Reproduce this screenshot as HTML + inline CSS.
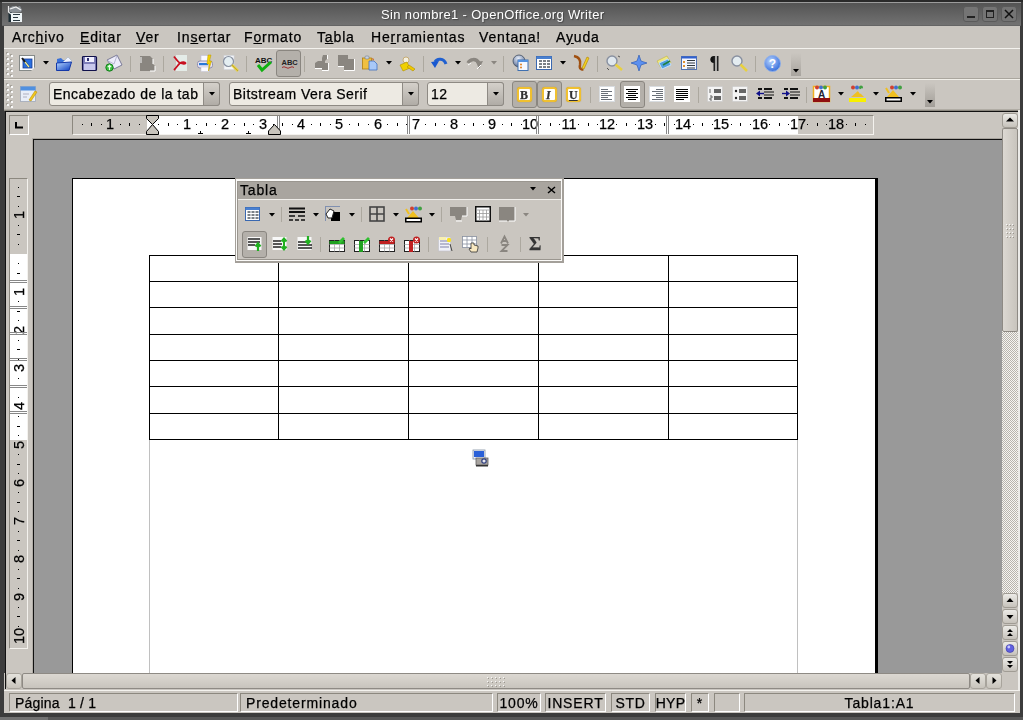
<!DOCTYPE html><html><head><meta charset="utf-8"><style>
html,body{margin:0;padding:0;width:1023px;height:720px;overflow:hidden;background:#3a3a3a;}
body{position:relative;font-family:"Liberation Sans", sans-serif;} .t{will-change:transform;-webkit-text-stroke:0.25px currentColor;}
div{box-sizing:border-box;}
svg{position:absolute;overflow:visible;}
</style></head><body>
<div style="position:absolute;left:0px;top:0px;width:1023px;height:720px;background:#3c3c3c"></div>
<div style="position:absolute;left:0px;top:0px;width:1023px;height:2px;background:#2a2a2a"></div>
<div style="position:absolute;left:2px;top:2px;width:1019px;height:1px;background:#9c9c9c"></div>
<div style="position:absolute;left:2px;top:3px;width:1019px;height:23px;background:linear-gradient(#545454,#737373)"></div>
<div style="position:absolute;left:2px;top:25px;width:1019px;height:1px;background:#656565"></div>
<svg style="left:7px;top:5px" width="16" height="17" viewBox="0 0 16 17"><path d="M2 3 L6 1 L10 2 L13 1 L15 5 L14 7 L3 8 Z" fill="#8a9096"/><path d="M3 4 L9 2 L14 5" stroke="#f0f0f0" stroke-width="1.3" fill="none"/><rect x="1.5" y="7" width="3" height="10" fill="#1c2c34"/><rect x="4" y="8" width="11" height="9" fill="#eef4f6"/><path d="M6 9.5h7M6 12.5h5M6 15.5h7" stroke="#2a3840" stroke-width="1.2"/><path d="M1.5 1 V7 L4 9" stroke="#e8e8e8" stroke-width="1.2" fill="none"/></svg>
<div class="t" style="position:absolute;left:381px;top:8px;font-size:13px;color:#ffffff;white-space:nowrap;line-height:1;letter-spacing:0.35px;-webkit-text-stroke:0;text-shadow:1px 1px 1px rgba(0,0,0,0.35)">Sin nombre1 - OpenOffice.org Writer</div>
<div style="position:absolute;left:963px;top:6px;width:16px;height:16px;background:#747474;border-radius:3px;border:1px solid #5a5a5a"></div>
<div style="position:absolute;left:982px;top:6px;width:16px;height:16px;background:#747474;border-radius:3px;border:1px solid #5a5a5a"></div>
<div style="position:absolute;left:1001px;top:6px;width:16px;height:16px;background:#747474;border-radius:3px;border:1px solid #5a5a5a"></div>
<div style="position:absolute;left:967px;top:16px;width:8px;height:2px;background:#222"></div>
<div style="position:absolute;left:986px;top:10px;width:8px;height:8px;border:1.5px solid #222;border-top-width:2px"></div>
<svg style="left:1004px;top:9px" width="10" height="10"><path d="M1 1L9 9M9 1L1 9" stroke="#111" stroke-width="1.5"/></svg>
<div style="position:absolute;left:4px;top:26px;width:1016px;height:22px;background:#cac6c0"></div>
<div style="position:absolute;left:4px;top:48px;width:1016px;height:1px;background:#f4f2ee"></div>
<div class="t" style="position:absolute;left:12px;top:30px;font-size:14px;color:#000;white-space:nowrap;line-height:1;letter-spacing:0.85px">Arc<u>h</u>ivo</div>
<div class="t" style="position:absolute;left:80px;top:30px;font-size:14px;color:#000;white-space:nowrap;line-height:1;letter-spacing:0.85px"><u>E</u>ditar</div>
<div class="t" style="position:absolute;left:136px;top:30px;font-size:14px;color:#000;white-space:nowrap;line-height:1;letter-spacing:0.85px"><u>V</u>er</div>
<div class="t" style="position:absolute;left:177px;top:30px;font-size:14px;color:#000;white-space:nowrap;line-height:1;letter-spacing:0.85px">In<u>s</u>ertar</div>
<div class="t" style="position:absolute;left:244px;top:30px;font-size:14px;color:#000;white-space:nowrap;line-height:1;letter-spacing:0.85px">F<u>o</u>rmato</div>
<div class="t" style="position:absolute;left:317px;top:30px;font-size:14px;color:#000;white-space:nowrap;line-height:1;letter-spacing:0.85px">T<u>a</u>bla</div>
<div class="t" style="position:absolute;left:371px;top:30px;font-size:14px;color:#000;white-space:nowrap;line-height:1;letter-spacing:0.85px">He<u>r</u>ramientas</div>
<div class="t" style="position:absolute;left:479px;top:30px;font-size:14px;color:#000;white-space:nowrap;line-height:1;letter-spacing:0.85px">Venta<u>n</u>a!</div>
<div class="t" style="position:absolute;left:556px;top:30px;font-size:14px;color:#000;white-space:nowrap;line-height:1;letter-spacing:0.85px">A<u>y</u>uda</div>
<div style="position:absolute;left:4px;top:49px;width:1016px;height:29px;background:#cac6c0"></div>
<div style="position:absolute;left:4px;top:78px;width:1016px;height:1px;background:#aaa69e"></div>
<div style="position:absolute;left:4px;top:79px;width:1016px;height:1px;background:#f0eee8"></div>
<div style="position:absolute;left:4px;top:80px;width:1016px;height:30px;background:#cac6c0"></div>
<div style="position:absolute;left:4px;top:109px;width:1016px;height:1px;background:#b0aca4"></div>
<div style="position:absolute;left:4px;top:110px;width:1016px;height:1px;background:#8a867e"></div>
<div style="position:absolute;left:7px;top:53px;width:2px;height:2px;background:#f8f8f8;box-shadow:-1px -1px 0 #a8a49c"></div>
<div style="position:absolute;left:11px;top:55px;width:2px;height:2px;background:#f8f8f8;box-shadow:-1px -1px 0 #a8a49c"></div>
<div style="position:absolute;left:7px;top:58px;width:2px;height:2px;background:#f8f8f8;box-shadow:-1px -1px 0 #a8a49c"></div>
<div style="position:absolute;left:11px;top:60px;width:2px;height:2px;background:#f8f8f8;box-shadow:-1px -1px 0 #a8a49c"></div>
<div style="position:absolute;left:7px;top:63px;width:2px;height:2px;background:#f8f8f8;box-shadow:-1px -1px 0 #a8a49c"></div>
<div style="position:absolute;left:11px;top:65px;width:2px;height:2px;background:#f8f8f8;box-shadow:-1px -1px 0 #a8a49c"></div>
<div style="position:absolute;left:7px;top:68px;width:2px;height:2px;background:#f8f8f8;box-shadow:-1px -1px 0 #a8a49c"></div>
<div style="position:absolute;left:11px;top:70px;width:2px;height:2px;background:#f8f8f8;box-shadow:-1px -1px 0 #a8a49c"></div>
<div style="position:absolute;left:7px;top:73px;width:2px;height:2px;background:#f8f8f8;box-shadow:-1px -1px 0 #a8a49c"></div>
<div style="position:absolute;left:11px;top:75px;width:2px;height:2px;background:#f8f8f8;box-shadow:-1px -1px 0 #a8a49c"></div>
<div style="position:absolute;left:7px;top:84px;width:2px;height:2px;background:#f8f8f8;box-shadow:-1px -1px 0 #a8a49c"></div>
<div style="position:absolute;left:11px;top:86px;width:2px;height:2px;background:#f8f8f8;box-shadow:-1px -1px 0 #a8a49c"></div>
<div style="position:absolute;left:7px;top:89px;width:2px;height:2px;background:#f8f8f8;box-shadow:-1px -1px 0 #a8a49c"></div>
<div style="position:absolute;left:11px;top:91px;width:2px;height:2px;background:#f8f8f8;box-shadow:-1px -1px 0 #a8a49c"></div>
<div style="position:absolute;left:7px;top:94px;width:2px;height:2px;background:#f8f8f8;box-shadow:-1px -1px 0 #a8a49c"></div>
<div style="position:absolute;left:11px;top:96px;width:2px;height:2px;background:#f8f8f8;box-shadow:-1px -1px 0 #a8a49c"></div>
<div style="position:absolute;left:7px;top:99px;width:2px;height:2px;background:#f8f8f8;box-shadow:-1px -1px 0 #a8a49c"></div>
<div style="position:absolute;left:11px;top:101px;width:2px;height:2px;background:#f8f8f8;box-shadow:-1px -1px 0 #a8a49c"></div>
<div style="position:absolute;left:7px;top:104px;width:2px;height:2px;background:#f8f8f8;box-shadow:-1px -1px 0 #a8a49c"></div>
<div style="position:absolute;left:11px;top:106px;width:2px;height:2px;background:#f8f8f8;box-shadow:-1px -1px 0 #a8a49c"></div>
<svg style="left:0;top:0" width="0" height="0"><defs><linearGradient id="gb" x1="0" y1="0" x2="0" y2="1"><stop offset="0" stop-color="#8cc0ff"/><stop offset="1" stop-color="#1048c8"/></linearGradient><linearGradient id="gf" x1="0" y1="0" x2="1" y2="1"><stop offset="0" stop-color="#b8d8ff"/><stop offset="1" stop-color="#0a3cc0"/></linearGradient><radialGradient id="gh" cx="0.4" cy="0.35" r="0.7"><stop offset="0" stop-color="#b8d4ff"/><stop offset="1" stop-color="#3068d8"/></radialGradient><linearGradient id="gx" x1="0" y1="0" x2="0" y2="1"><stop offset="0" stop-color="#e8e6e2"/><stop offset="1" stop-color="#8e8a84"/></linearGradient><radialGradient id="gg" cx="0.45" cy="0.3" r="0.8"><stop offset="0" stop-color="#e8eef8"/><stop offset="0.6" stop-color="#8898b8"/><stop offset="1" stop-color="#304060"/></radialGradient></defs></svg>
<svg style="left:19px;top:55px" width="16" height="16" viewBox="0 0 16 16"><rect x="0.5" y="0.5" width="15" height="15" fill="#fafcff" stroke="#868a88"/><rect x="4" y="4" width="9" height="9" fill="#2a70e0" stroke="#1a3a90" stroke-width="0.8"/><path d="M3 3 L10 12" stroke="#1a1a1a" stroke-width="2"/><path d="M6 7 L10 12" stroke="#e8e8a0" stroke-width="1.5"/><path d="M12 16 L16 12 L16 16Z" fill="#cac6c0"/></svg>
<svg style="left:43px;top:61px" width="6" height="4"><path d="M0 0H6L3 3.5Z" fill="#000"/></svg>
<svg style="left:56px;top:55px" width="16" height="16" viewBox="0 0 16 16"><path d="M1 4 L5 3 L7 5 L13 5 L13 15 L1 15Z" fill="#3a70d8"/><path d="M5 9 L12 2 L16 6 L11 10Z" fill="#eef2ff" stroke="#9ab" stroke-width="0.5"/><path d="M0.5 8 L15.5 7 L13 15.5 L0.5 15.5Z" fill="url(#gf)" stroke="#1438a8" stroke-width="1"/></svg>
<svg style="left:82px;top:56px" width="15" height="15" viewBox="0 0 15 15"><rect x="0.5" y="0.5" width="14" height="14" rx="1" fill="#7e7eb8" stroke="#10104a" stroke-width="1.2"/><rect x="3" y="1" width="9" height="5" fill="#f0f0ff"/><rect x="5" y="2" width="2" height="3" fill="#303070"/><rect x="2" y="8" width="11" height="6" fill="#c8c8ec"/></svg>
<svg style="left:105px;top:54px" width="18" height="18" viewBox="0 0 18 18"><path d="M2 6 L12 1 L17 11 L9 15 Z" fill="#ececfa" stroke="#707090" stroke-width="0.9"/><path d="M2.5 6.5 L9 10 L12 1.5" fill="none" stroke="#a8a8c8" stroke-width="0.8"/><circle cx="4.5" cy="13.5" r="3.7" fill="#3cc040" stroke="#107818" stroke-width="0.9"/><path d="M4.5 16 V11.5 M2.8 13.2 L4.5 11.3 L6.2 13.2" stroke="#e8ffe8" stroke-width="1.2" fill="none"/></svg>
<div style="position:absolute;left:130px;top:56px;width:1px;height:16px;background:#aca89f"></div>
<svg style="left:139px;top:55px" width="17" height="17" viewBox="0 0 17 17"><path d="M1 1 H11 L14 4 V9 L16 11 V16 H1Z" fill="#8a8680"/><path d="M11 16 H16 V11 M14 4 V9" stroke="#fff" stroke-width="1" fill="none"/><path d="M2 2 V8" stroke="#f4f4f4" stroke-width="1"/></svg>
<div style="position:absolute;left:163px;top:56px;width:1px;height:16px;background:#aca89f"></div>
<svg style="left:172px;top:55px" width="16" height="16" viewBox="0 0 16 16"><rect x="4" y="0" width="11" height="16" fill="#e4ece8"/><path d="M2 1.5 C4 4 6 7 8 8 M8 8 C11 9 13 9 13.5 8 C13 6.5 10 7 8 8 C6 10 4 13 2 15" fill="none" stroke="#c81020" stroke-width="1.8"/></svg>
<svg style="left:197px;top:55px" width="17" height="17" viewBox="0 0 17 17"><rect x="4" y="0.5" width="9" height="6" fill="#f8f8ff" stroke="#c0c0d8" stroke-width="0.6"/><rect x="0.5" y="6" width="15" height="7" rx="2.5" fill="#e8e4f4" stroke="#8888a8" stroke-width="0.9"/><rect x="2" y="8" width="9" height="2.2" fill="#2878d8"/><rect x="4" y="12" width="8" height="4.5" fill="#fafaff" stroke="#c0c0d0" stroke-width="0.5"/><path d="M11 0 L14 0 L12.5 6 L14.5 6 L11.5 16 L12 9 L10 9Z" fill="#f4d000" stroke="#b89800" stroke-width="0.5"/></svg>
<svg style="left:222px;top:55px" width="17" height="17" viewBox="0 0 17 17"><rect x="2" y="0.5" width="10" height="14" fill="#f4f6f8" stroke="#d0d4dc" stroke-width="0.6"/><circle cx="6.5" cy="6.5" r="5" fill="#e4eef2" stroke="#8890a0" stroke-width="1.2"/><path d="M10 10 L16 16" stroke="#e8d040" stroke-width="2.5"/><path d="M10 10 L16 16" stroke="#908030" stroke-width="0.5"/></svg>
<div style="position:absolute;left:246px;top:56px;width:1px;height:16px;background:#aca89f"></div>
<svg style="left:254px;top:55px" width="18" height="17" viewBox="0 0 18 17"><text x="1" y="7.5" font-family="Liberation Sans" font-weight="bold" font-size="8" fill="#111">ABC</text><path d="M4 10 L8 15 L17 7" fill="none" stroke="#10b010" stroke-width="3"/></svg>
<div style="position:absolute;left:276px;top:50px;width:25px;height:27px;background:#b4b0aa;border:1px solid #8a8680;border-radius:3px"></div>
<svg style="left:281px;top:58px" width="15" height="12" viewBox="0 0 15 12"><text x="0.5" y="7" font-family="Liberation Sans" font-weight="bold" font-size="7.5" fill="#222">ABC</text><path d="M1 9.5 Q3 8 5 9.5 T9 9.5 T13 9.5" fill="none" stroke="#a03030" stroke-width="1"/></svg>
<div style="position:absolute;left:304px;top:56px;width:1px;height:16px;background:#aca89f"></div>
<svg style="left:314px;top:55px" width="16" height="17" viewBox="0 0 16 17"><path d="M9 0 H13 V4 L11 6 V8 H14 V15 H8 V13 H1 V8 L4 6 H8 V3Z" fill="#8a8680"/><path d="M13.5 0 V4 M14.5 8 V15.5 H8 M8 13.5 H1" stroke="#fff" stroke-width="1" fill="none"/></svg>
<svg style="left:338px;top:55px" width="18" height="17" viewBox="0 0 18 17"><rect x="0" y="0" width="10" height="11" fill="#8a8680"/><rect x="6" y="4" width="10" height="11" fill="#8a8680"/><path d="M0 11.5 H6 M16.5 4 V15.5 H6" stroke="#fff" stroke-width="1" fill="none"/></svg>
<svg style="left:362px;top:55px" width="17" height="16" viewBox="0 0 17 16"><rect x="0.5" y="3" width="9" height="11" fill="#f0c040" stroke="#b08010" stroke-width="0.8"/><rect x="3" y="1" width="4" height="3" rx="1" fill="#c8d0e0" stroke="#708090" stroke-width="0.6"/><path d="M7 6 H12 L15 9 V15 H7Z" fill="#a8c8f8" stroke="#4070c0" stroke-width="0.8"/><path d="M10 3 L12 4 L11 6" fill="#d06010"/></svg>
<svg style="left:386px;top:61px" width="6" height="4"><path d="M0 0H6L3 3.5Z" fill="#000"/></svg>
<svg style="left:399px;top:55px" width="17" height="17" viewBox="0 0 17 17"><circle cx="7" cy="5" r="3" fill="#f4f0e0" stroke="#c0a060" stroke-width="0.8"/><path d="M1 10 L8 7 L11 13 L4 16Z" fill="#f0d000" stroke="#b09000" stroke-width="0.6"/><path d="M10 10 L16 14 L14 16 L8 12Z" fill="#f0c800" stroke="#b09000" stroke-width="0.6"/></svg>
<div style="position:absolute;left:423px;top:56px;width:1px;height:16px;background:#aca89f"></div>
<svg style="left:431px;top:57px" width="17" height="12" viewBox="0 0 17 12"><path d="M15 7 C13 1 6 1 4 5" fill="none" stroke="#2060d0" stroke-width="3"/><path d="M0 5 L8 4 L4 11Z" fill="#1858d0"/></svg>
<svg style="left:455px;top:61px" width="6" height="4"><path d="M0 0H6L3 3.5Z" fill="#000"/></svg>
<svg style="left:467px;top:57px" width="17" height="13" viewBox="0 0 17 13"><path d="M1 6 C3 2 9 1 12 6" fill="none" stroke="#8a8680" stroke-width="3.5"/><path d="M9 5 L16 4 L12 12Z" fill="#8a8680"/><path d="M1 8 L4 6 M10 12 L14 8" stroke="#fff" stroke-width="1"/></svg>
<svg style="left:491px;top:61px" width="6" height="4"><path d="M0 0H6L3 3.5Z" fill="#8a8680"/></svg>
<div style="position:absolute;left:503px;top:56px;width:1px;height:16px;background:#aca89f"></div>
<svg style="left:513px;top:55px" width="16" height="16" viewBox="0 0 16 16"><circle cx="6" cy="6" r="6" fill="url(#gg)" stroke="#404c60" stroke-width="0.8"/><rect x="5" y="5" width="10" height="10.5" fill="#f4f8ff" stroke="#4070b0" stroke-width="1"/><rect x="5" y="5" width="10" height="2" fill="#5090e0"/><circle cx="8" cy="9.5" r="1" fill="#e08020"/><circle cx="8" cy="12.5" r="1" fill="#e08020"/></svg>
<svg style="left:536px;top:56px" width="16" height="14" viewBox="0 0 16 14"><rect x="0.5" y="0.5" width="15" height="13" fill="#fff" stroke="#3a68b0" stroke-width="1"/><rect x="0.5" y="0.5" width="15" height="2.5" fill="#4a80d0"/><path d="M3 5h3M7 5h3M11 5h3M3 8h3M7 8h3M11 8h3M3 11h3M7 11h3M11 11h3" stroke="#505860" stroke-width="1.3"/></svg>
<svg style="left:560px;top:61px" width="6" height="4"><path d="M0 0H6L3 3.5Z" fill="#000"/></svg>
<svg style="left:573px;top:55px" width="16" height="16" viewBox="0 0 16 16"><path d="M1 1 C6 2 8 5 7 10 C6 14 9 15 10 14" fill="none" stroke="#a05010" stroke-width="2.5"/><path d="M9 13 L14 2 L16 3 L11 14Z" fill="#f0d020" stroke="#b08000" stroke-width="0.6"/></svg>
<div style="position:absolute;left:597px;top:56px;width:1px;height:16px;background:#aca89f"></div>
<svg style="left:606px;top:55px" width="17" height="16" viewBox="0 0 17 16"><circle cx="6" cy="6" r="5" fill="#e0e8ee" stroke="#8890a0" stroke-width="1.4"/><path d="M9.5 9.5 L16 15" stroke="#e8d040" stroke-width="2.5"/><path d="M12 1 L14 2 M1 13 L3 15" stroke="#555" stroke-width="1"/></svg>
<svg style="left:631px;top:55px" width="16" height="16" viewBox="0 0 16 16"><path d="M8 0 L10 6 L16 8 L10 10 L8 16 L6 10 L0 8 L6 6Z" fill="#5c90f0" stroke="#2050b0" stroke-width="0.6"/></svg>
<svg style="left:656px;top:55px" width="16" height="15" viewBox="0 0 16 15"><path d="M1 6 L11 1 L15 8 L5 13Z" fill="#f0e880" stroke="#c0b040" stroke-width="0.6"/><path d="M3 8 L12 4 L15 10 L6 14Z" fill="#50a0e0" stroke="#c0e0ff" stroke-width="1"/><path d="M7 10 L14 6" stroke="#208040" stroke-width="1.5"/></svg>
<svg style="left:681px;top:56px" width="16" height="14" viewBox="0 0 16 14"><rect x="0.5" y="0.5" width="15" height="13" fill="#f4f6ff" stroke="#5070b0" stroke-width="1"/><rect x="0.5" y="0.5" width="15" height="2" fill="#3060d0"/><rect x="2" y="5" width="2" height="2" fill="#e09030"/><rect x="2" y="9" width="2" height="2" fill="#e09030"/><path d="M6 4.5h8M6 7h8M6 9.5h8M6 12h8" stroke="#303840" stroke-width="1"/></svg>
<svg style="left:709px;top:55px" width="10" height="17" viewBox="0 0 10 17"><path d="M5 1 C0 1 0 8 5 8Z" fill="#111"/><rect x="4.5" y="1" width="2" height="15" fill="#222"/><rect x="7.5" y="1" width="2" height="15" fill="#222"/><rect x="6.5" y="1" width="1" height="15" fill="#ddd"/></svg>
<svg style="left:731px;top:55px" width="17" height="17" viewBox="0 0 17 17"><circle cx="6" cy="6" r="5" fill="#e4ecf0" stroke="#8890a0" stroke-width="1.4"/><path d="M9.5 9.5 L16 16" stroke="#e8d040" stroke-width="2.5"/></svg>
<div style="position:absolute;left:755px;top:56px;width:1px;height:16px;background:#aca89f"></div>
<svg style="left:764px;top:55px" width="17" height="17" viewBox="0 0 17 17"><circle cx="8.5" cy="8.5" r="8" fill="url(#gh)" stroke="#90b0e8" stroke-width="1"/><text x="8.5" y="13" text-anchor="middle" font-family="Liberation Sans" font-weight="bold" font-size="12" fill="#fff">?</text></svg>
<div style="position:absolute;left:791px;top:53px;width:10px;height:23px;background:linear-gradient(#cac6c0,#a8a49e)"></div>
<svg style="left:793px;top:69px" width="6" height="4"><path d="M0 0H6L3 3.5Z" fill="#000"/></svg>
<svg style="left:20px;top:86px" width="17" height="17" viewBox="0 0 17 17"><rect x="0.5" y="0.5" width="15" height="15" fill="#e8eef8" stroke="#a0a8b8" stroke-width="0.8"/><rect x="0.5" y="0.5" width="15" height="4" fill="#5090e0"/><path d="M3 8h6M3 11h4" stroke="#b0b0c0" stroke-width="1"/><path d="M9 14 L15 5 L17 6 L11 15Z" fill="#f0c820" stroke="#c09000" stroke-width="0.6"/></svg>
<div style="position:absolute;left:49px;top:82px;width:171px;height:24px;background:#edeae3;border:1px solid #8e8a84;border-radius:3px"></div>
<div style="position:absolute;left:203px;top:82px;width:17px;height:24px;background:linear-gradient(#d4d0ca,#b0aca6);border:1px solid #8e8a84;border-radius:0 3px 3px 0"></div>
<svg style="left:209px;top:92px" width="6" height="4"><path d="M0 0H6L3 3.5Z" fill="#000"/></svg>
<div class="t" style="position:absolute;left:53px;top:87px;font-size:14px;color:#000;white-space:nowrap;line-height:1;letter-spacing:0.5px">Encabezado de la tab</div>
<div style="position:absolute;left:229px;top:82px;width:190px;height:24px;background:#edeae3;border:1px solid #8e8a84;border-radius:3px"></div>
<div style="position:absolute;left:402px;top:82px;width:17px;height:24px;background:linear-gradient(#d4d0ca,#b0aca6);border:1px solid #8e8a84;border-radius:0 3px 3px 0"></div>
<svg style="left:408px;top:92px" width="6" height="4"><path d="M0 0H6L3 3.5Z" fill="#000"/></svg>
<div class="t" style="position:absolute;left:233px;top:87px;font-size:14px;color:#000;white-space:nowrap;line-height:1;letter-spacing:0.5px">Bitstream Vera Serif</div>
<div style="position:absolute;left:427px;top:82px;width:77px;height:24px;background:#edeae3;border:1px solid #8e8a84;border-radius:3px"></div>
<div style="position:absolute;left:487px;top:82px;width:17px;height:24px;background:linear-gradient(#d4d0ca,#b0aca6);border:1px solid #8e8a84;border-radius:0 3px 3px 0"></div>
<svg style="left:493px;top:92px" width="6" height="4"><path d="M0 0H6L3 3.5Z" fill="#000"/></svg>
<div class="t" style="position:absolute;left:431px;top:87px;font-size:14px;color:#000;white-space:nowrap;line-height:1;letter-spacing:0.5px">12</div>
<div style="position:absolute;left:512px;top:81px;width:25px;height:27px;background:#b4b0aa;border:1px solid #8a8680;border-radius:3px"></div>
<div style="position:absolute;left:537px;top:81px;width:25px;height:27px;background:#b4b0aa;border:1px solid #8a8680;border-radius:3px"></div>
<div style="position:absolute;left:517px;top:87px;width:15px;height:15px;background:#fff;border:2px solid #f0c030;border-radius:3px;box-shadow:0 0 1px #c09010"></div>
<div class="t" style="position:absolute;left:520px;top:89px;font-size:12px;color:#333;white-space:nowrap;line-height:1;font-family:'Liberation Serif',serif;font-weight:bold;">B</div>
<div style="position:absolute;left:542px;top:87px;width:15px;height:15px;background:#fff;border:2px solid #f0c030;border-radius:3px;box-shadow:0 0 1px #c09010"></div>
<div class="t" style="position:absolute;left:545px;top:89px;font-size:12px;color:#333;white-space:nowrap;line-height:1;font-family:'Liberation Serif',serif;font-weight:bold;font-style:italic;left:546px">I</div>
<div style="position:absolute;left:566px;top:87px;width:15px;height:15px;background:#fff;border:2px solid #f0c030;border-radius:3px;box-shadow:0 0 1px #c09010"></div>
<div class="t" style="position:absolute;left:569px;top:89px;font-size:12px;color:#333;white-space:nowrap;line-height:1;font-family:'Liberation Serif',serif;font-weight:bold;text-decoration:underline">U</div>
<div style="position:absolute;left:590px;top:87px;width:1px;height:16px;background:#aca89f"></div>
<svg style="left:599px;top:86px" width="16" height="16" viewBox="0 0 16 16"><rect x="0" y="0" width="16" height="16" fill="#fff"/><rect x="0.5" y="0.5" width="15" height="15" fill="none" stroke="#d8dce0" stroke-width="1"/><path d="M2 3.5h7M2 5.5h11M2 7.5h7M2 9.5h11M2 11.5h7M2 13.5h11" stroke="#6a7078" stroke-width="1.2"/></svg>
<div style="position:absolute;left:620px;top:81px;width:25px;height:27px;background:#b4b0aa;border:1px solid #8a8680;border-radius:3px"></div>
<svg style="left:624px;top:86px" width="16" height="16" viewBox="0 0 16 16"><rect x="0" y="0" width="16" height="16" fill="#fff"/><path d="M2 3.5h12M4 5.5h8M2 7.5h12M4 9.5h8M2 11.5h12M4 13.5h8" stroke="#000" stroke-width="1"/></svg>
<svg style="left:649px;top:86px" width="16" height="16" viewBox="0 0 16 16"><rect x="0" y="0" width="16" height="16" fill="#fff"/><rect x="0.5" y="0.5" width="15" height="15" fill="none" stroke="#d8dce0" stroke-width="1"/><path d="M7 3.5h7M3 5.5h11M7 7.5h7M3 9.5h11M7 11.5h7M3 13.5h11" stroke="#6a7078" stroke-width="1.2"/></svg>
<svg style="left:674px;top:86px" width="16" height="16" viewBox="0 0 16 16"><rect x="0" y="0" width="16" height="16" fill="#fff"/><path d="M2 3.5h12M2 5.5h12M2 7.5h12M2 9.5h12M2 11.5h12M2 13.5h8" stroke="#000" stroke-width="1"/></svg>
<div style="position:absolute;left:698px;top:87px;width:1px;height:16px;background:#aca89f"></div>
<svg style="left:707px;top:86px" width="16" height="16" viewBox="0 0 16 16"><rect x="0.5" y="0.5" width="15" height="15" fill="#f4f4f4" stroke="#c8c8c8" stroke-width="0.6"/><path d="M3 3V7M3 10h2v2h-2v2h2" stroke="#666" stroke-width="1" fill="none"/><rect x="7" y="3" width="7" height="4" fill="#666"/><rect x="7" y="10" width="7" height="4" fill="#666"/></svg>
<svg style="left:732px;top:86px" width="16" height="16" viewBox="0 0 16 16"><rect x="0.5" y="0.5" width="15" height="15" fill="#f4f4f4" stroke="#c8c8c8" stroke-width="0.6"/><circle cx="4" cy="5" r="1.2" fill="#222"/><circle cx="4" cy="12" r="1.2" fill="#222"/><rect x="7" y="3" width="7" height="4" fill="#666"/><rect x="7" y="10" width="7" height="4" fill="#666"/></svg>
<svg style="left:756px;top:88px" width="18" height="12" viewBox="0 0 18 12"><path d="M2 1h4M8 1h8M2 10h4M8 10h8" stroke="#111" stroke-width="1.8"/><path d="M8 4h10M8 7h10" stroke="#111" stroke-width="1.2"/><path d="M0 5.5 L4 2.5 V8.5Z" fill="#10108a"/><path d="M3 5.5h5" stroke="#10108a" stroke-width="1.4"/></svg>
<svg style="left:782px;top:88px" width="18" height="12" viewBox="0 0 18 12"><path d="M2 1h4M8 1h8M2 10h4M8 10h8" stroke="#111" stroke-width="1.8"/><path d="M8 4h10M8 7h10" stroke="#111" stroke-width="1.2"/><path d="M8 5.5 L4 2.5 V8.5Z" fill="#10108a"/><path d="M0 5.5h5" stroke="#10108a" stroke-width="1.4"/></svg>
<div style="position:absolute;left:806px;top:87px;width:1px;height:16px;background:#aca89f"></div>
<svg style="left:813px;top:85px" width="17" height="17" viewBox="0 0 17 17"><rect x="0.5" y="1.5" width="16" height="15" fill="#fff" stroke="#f0b020" stroke-width="1.5"/><circle cx="4" cy="2.5" r="2" fill="#d04030"/><circle cx="8" cy="2.5" r="2" fill="#4070d0"/><circle cx="12" cy="2.5" r="2" fill="#40a040"/><text x="8.5" y="12.5" text-anchor="middle" font-family="Liberation Sans" font-weight="bold" font-size="10" fill="#223">A</text><rect x="0" y="13" width="17" height="4" fill="#901010"/></svg>
<svg style="left:838px;top:92px" width="6" height="4"><path d="M0 0H6L3 3.5Z" fill="#000"/></svg>
<svg style="left:849px;top:85px" width="17" height="17" viewBox="0 0 17 17"><circle cx="4" cy="2.5" r="2" fill="#d04030"/><circle cx="8" cy="2.5" r="2" fill="#4070d0"/><circle cx="12" cy="2.5" r="2" fill="#40a040"/><path d="M2 12 L9 6 L15 12Z" fill="#f0c020"/><path d="M9 6 L13 3 L15 5 L11 9" fill="#c8c8c8"/><rect x="0" y="13" width="17" height="4" fill="#f8f000"/></svg>
<svg style="left:873px;top:92px" width="6" height="4"><path d="M0 0H6L3 3.5Z" fill="#000"/></svg>
<svg style="left:885px;top:85px" width="17" height="17" viewBox="0 0 17 17"><circle cx="7" cy="2.5" r="2" fill="#d04030"/><circle cx="11" cy="2.5" r="2" fill="#4070d0"/><circle cx="15" cy="2.5" r="2" fill="#40a040"/><path d="M2 12 L8 5 L14 12Z" fill="#f0c020"/><path d="M1 3 L4 8" stroke="#f0c020" stroke-width="2"/><rect x="0.75" y="12.75" width="15.5" height="3.5" fill="#fff" stroke="#000" stroke-width="1.5"/></svg>
<svg style="left:910px;top:92px" width="6" height="4"><path d="M0 0H6L3 3.5Z" fill="#000"/></svg>
<div style="position:absolute;left:925px;top:83px;width:10px;height:24px;background:linear-gradient(#cac6c0,#a29e98)"></div>
<svg style="left:927px;top:100px" width="6" height="4"><path d="M0 0H6L3 3.5Z" fill="#000"/></svg>
<div style="position:absolute;left:5px;top:111px;width:1013px;height:1px;background:#111"></div>
<div style="position:absolute;left:5px;top:111px;width:1px;height:562px;background:#111"></div>
<div style="position:absolute;left:6px;top:112px;width:1014px;height:27px;background:#cac6c0"></div>
<div style="position:absolute;left:9px;top:115px;width:20px;height:20px;border:1px solid #8c887f;border-right-color:#fff;border-bottom-color:#fff"></div>
<svg style="left:15px;top:122px" width="8" height="7"><path d="M1 0V5.5H8" stroke="#000" stroke-width="2" fill="none"/></svg>
<div style="position:absolute;left:72px;top:115px;width:802px;height:20px;background:#cac6c0;border:1px solid #8c887f;border-right-color:#f4f2ee;border-bottom-color:#f4f2ee"></div>
<div style="position:absolute;left:147px;top:116px;width:651px;height:18px;background:#fff"></div>
<div style="position:absolute;left:82px;top:124px;width:1px;height:1px;background:#000"></div>
<div style="position:absolute;left:91px;top:123px;width:1px;height:3px;background:#000"></div>
<div style="position:absolute;left:101px;top:124px;width:1px;height:1px;background:#000"></div>
<div class="t" style="position:absolute;left:90.2px;top:116.5px;width:40px;text-align:center;font-size:14.5px;line-height:1;color:#000">1</div>
<div style="position:absolute;left:120px;top:124px;width:1px;height:1px;background:#000"></div>
<div style="position:absolute;left:129px;top:123px;width:1px;height:3px;background:#000"></div>
<div style="position:absolute;left:139px;top:124px;width:1px;height:1px;background:#000"></div>
<div style="position:absolute;left:158px;top:124px;width:1px;height:1px;background:#000"></div>
<div style="position:absolute;left:168px;top:123px;width:1px;height:3px;background:#000"></div>
<div style="position:absolute;left:177px;top:124px;width:1px;height:1px;background:#000"></div>
<div class="t" style="position:absolute;left:166.6px;top:116.5px;width:40px;text-align:center;font-size:14.5px;line-height:1;color:#000">1</div>
<div style="position:absolute;left:196px;top:124px;width:1px;height:1px;background:#000"></div>
<div style="position:absolute;left:206px;top:123px;width:1px;height:3px;background:#000"></div>
<div style="position:absolute;left:215px;top:124px;width:1px;height:1px;background:#000"></div>
<div class="t" style="position:absolute;left:204.8px;top:116.5px;width:40px;text-align:center;font-size:14.5px;line-height:1;color:#000">2</div>
<div style="position:absolute;left:234px;top:124px;width:1px;height:1px;background:#000"></div>
<div style="position:absolute;left:244px;top:123px;width:1px;height:3px;background:#000"></div>
<div style="position:absolute;left:253px;top:124px;width:1px;height:1px;background:#000"></div>
<div class="t" style="position:absolute;left:243.0px;top:116.5px;width:40px;text-align:center;font-size:14.5px;line-height:1;color:#000">3</div>
<div style="position:absolute;left:273px;top:124px;width:1px;height:1px;background:#000"></div>
<div style="position:absolute;left:282px;top:123px;width:1px;height:3px;background:#000"></div>
<div style="position:absolute;left:292px;top:124px;width:1px;height:1px;background:#000"></div>
<div class="t" style="position:absolute;left:281.2px;top:116.5px;width:40px;text-align:center;font-size:14.5px;line-height:1;color:#000">4</div>
<div style="position:absolute;left:311px;top:124px;width:1px;height:1px;background:#000"></div>
<div style="position:absolute;left:320px;top:123px;width:1px;height:3px;background:#000"></div>
<div style="position:absolute;left:330px;top:124px;width:1px;height:1px;background:#000"></div>
<div class="t" style="position:absolute;left:319.4px;top:116.5px;width:40px;text-align:center;font-size:14.5px;line-height:1;color:#000">5</div>
<div style="position:absolute;left:349px;top:124px;width:1px;height:1px;background:#000"></div>
<div style="position:absolute;left:358px;top:123px;width:1px;height:3px;background:#000"></div>
<div style="position:absolute;left:368px;top:124px;width:1px;height:1px;background:#000"></div>
<div class="t" style="position:absolute;left:357.6px;top:116.5px;width:40px;text-align:center;font-size:14.5px;line-height:1;color:#000">6</div>
<div style="position:absolute;left:387px;top:124px;width:1px;height:1px;background:#000"></div>
<div style="position:absolute;left:397px;top:123px;width:1px;height:3px;background:#000"></div>
<div style="position:absolute;left:406px;top:124px;width:1px;height:1px;background:#000"></div>
<div class="t" style="position:absolute;left:395.8px;top:116.5px;width:40px;text-align:center;font-size:14.5px;line-height:1;color:#000">7</div>
<div style="position:absolute;left:425px;top:124px;width:1px;height:1px;background:#000"></div>
<div style="position:absolute;left:435px;top:123px;width:1px;height:3px;background:#000"></div>
<div style="position:absolute;left:444px;top:124px;width:1px;height:1px;background:#000"></div>
<div class="t" style="position:absolute;left:434.0px;top:116.5px;width:40px;text-align:center;font-size:14.5px;line-height:1;color:#000">8</div>
<div style="position:absolute;left:464px;top:124px;width:1px;height:1px;background:#000"></div>
<div style="position:absolute;left:473px;top:123px;width:1px;height:3px;background:#000"></div>
<div style="position:absolute;left:483px;top:124px;width:1px;height:1px;background:#000"></div>
<div class="t" style="position:absolute;left:472.2px;top:116.5px;width:40px;text-align:center;font-size:14.5px;line-height:1;color:#000">9</div>
<div style="position:absolute;left:502px;top:124px;width:1px;height:1px;background:#000"></div>
<div style="position:absolute;left:511px;top:123px;width:1px;height:3px;background:#000"></div>
<div style="position:absolute;left:521px;top:124px;width:1px;height:1px;background:#000"></div>
<div class="t" style="position:absolute;left:510.4px;top:116.5px;width:40px;text-align:center;font-size:14.5px;line-height:1;color:#000">10</div>
<div style="position:absolute;left:540px;top:124px;width:1px;height:1px;background:#000"></div>
<div style="position:absolute;left:550px;top:123px;width:1px;height:3px;background:#000"></div>
<div style="position:absolute;left:559px;top:124px;width:1px;height:1px;background:#000"></div>
<div class="t" style="position:absolute;left:548.6px;top:116.5px;width:40px;text-align:center;font-size:14.5px;line-height:1;color:#000">11</div>
<div style="position:absolute;left:578px;top:124px;width:1px;height:1px;background:#000"></div>
<div style="position:absolute;left:588px;top:123px;width:1px;height:3px;background:#000"></div>
<div style="position:absolute;left:597px;top:124px;width:1px;height:1px;background:#000"></div>
<div class="t" style="position:absolute;left:586.8px;top:116.5px;width:40px;text-align:center;font-size:14.5px;line-height:1;color:#000">12</div>
<div style="position:absolute;left:616px;top:124px;width:1px;height:1px;background:#000"></div>
<div style="position:absolute;left:626px;top:123px;width:1px;height:3px;background:#000"></div>
<div style="position:absolute;left:635px;top:124px;width:1px;height:1px;background:#000"></div>
<div class="t" style="position:absolute;left:625.0px;top:116.5px;width:40px;text-align:center;font-size:14.5px;line-height:1;color:#000">13</div>
<div style="position:absolute;left:655px;top:124px;width:1px;height:1px;background:#000"></div>
<div style="position:absolute;left:664px;top:123px;width:1px;height:3px;background:#000"></div>
<div style="position:absolute;left:674px;top:124px;width:1px;height:1px;background:#000"></div>
<div class="t" style="position:absolute;left:663.2px;top:116.5px;width:40px;text-align:center;font-size:14.5px;line-height:1;color:#000">14</div>
<div style="position:absolute;left:693px;top:124px;width:1px;height:1px;background:#000"></div>
<div style="position:absolute;left:702px;top:123px;width:1px;height:3px;background:#000"></div>
<div style="position:absolute;left:712px;top:124px;width:1px;height:1px;background:#000"></div>
<div class="t" style="position:absolute;left:701.4px;top:116.5px;width:40px;text-align:center;font-size:14.5px;line-height:1;color:#000">15</div>
<div style="position:absolute;left:731px;top:124px;width:1px;height:1px;background:#000"></div>
<div style="position:absolute;left:740px;top:123px;width:1px;height:3px;background:#000"></div>
<div style="position:absolute;left:750px;top:124px;width:1px;height:1px;background:#000"></div>
<div class="t" style="position:absolute;left:739.6px;top:116.5px;width:40px;text-align:center;font-size:14.5px;line-height:1;color:#000">16</div>
<div style="position:absolute;left:769px;top:124px;width:1px;height:1px;background:#000"></div>
<div style="position:absolute;left:779px;top:123px;width:1px;height:3px;background:#000"></div>
<div style="position:absolute;left:788px;top:124px;width:1px;height:1px;background:#000"></div>
<div class="t" style="position:absolute;left:777.8px;top:116.5px;width:40px;text-align:center;font-size:14.5px;line-height:1;color:#000">17</div>
<div style="position:absolute;left:807px;top:124px;width:1px;height:1px;background:#000"></div>
<div style="position:absolute;left:817px;top:123px;width:1px;height:3px;background:#000"></div>
<div style="position:absolute;left:826px;top:124px;width:1px;height:1px;background:#000"></div>
<div class="t" style="position:absolute;left:816.0px;top:116.5px;width:40px;text-align:center;font-size:14.5px;line-height:1;color:#000">18</div>
<div style="position:absolute;left:846px;top:124px;width:1px;height:1px;background:#000"></div>
<div style="position:absolute;left:855px;top:123px;width:1px;height:3px;background:#000"></div>
<div style="position:absolute;left:865px;top:124px;width:1px;height:1px;background:#000"></div>
<div style="position:absolute;left:277px;top:116px;width:1px;height:18px;background:#888"></div>
<div style="position:absolute;left:279px;top:116px;width:1px;height:18px;background:#888"></div>
<div style="position:absolute;left:407px;top:116px;width:1px;height:18px;background:#888"></div>
<div style="position:absolute;left:409px;top:116px;width:1px;height:18px;background:#888"></div>
<div style="position:absolute;left:536px;top:116px;width:1px;height:18px;background:#888"></div>
<div style="position:absolute;left:538px;top:116px;width:1px;height:18px;background:#888"></div>
<div style="position:absolute;left:666px;top:116px;width:1px;height:18px;background:#888"></div>
<div style="position:absolute;left:668px;top:116px;width:1px;height:18px;background:#888"></div>
<svg style="left:146px;top:115px" width="13" height="20" viewBox="0 0 13 20"><path d="M0.5 0.5H12.5V3.5L6.5 9.5L0.5 3.5Z" fill="#c8c4bc" stroke="#000" stroke-width="1"/><path d="M0.5 19.5H12.5V16.5L6.5 9.5L0.5 16.5Z" fill="#c8c4bc" stroke="#000" stroke-width="1"/></svg>
<svg style="left:268px;top:124px" width="13" height="11" viewBox="0 0 13 11"><path d="M6.5 0.5L12.5 7V10.5H0.5V7Z" fill="#c8c4bc" stroke="#000" stroke-width="1"/></svg>
<div style="position:absolute;left:200px;top:131px;width:1px;height:3px;background:#000"></div>
<div style="position:absolute;left:198px;top:133px;width:5px;height:1px;background:#000"></div>
<div style="position:absolute;left:248px;top:131px;width:1px;height:3px;background:#000"></div>
<div style="position:absolute;left:246px;top:133px;width:5px;height:1px;background:#000"></div>
<div style="position:absolute;left:32px;top:138px;width:971px;height:1px;background:#a8a49e"></div>
<div style="position:absolute;left:32px;top:138px;width:1px;height:535px;background:#b0aca6"></div>
<div style="position:absolute;left:33px;top:139px;width:970px;height:1px;background:#111"></div>
<div style="position:absolute;left:33px;top:139px;width:1px;height:534px;background:#111"></div>
<div style="position:absolute;left:34px;top:140px;width:968px;height:533px;background:#999999"></div>
<div style="position:absolute;left:6px;top:139px;width:26px;height:534px;background:#cac6c0"></div>
<div style="position:absolute;left:9px;top:178px;width:19px;height:471px;background:#cac6c0;border:1px solid #8c887f;border-right-color:#f4f2ee;border-bottom-color:#f4f2ee"></div>
<div style="position:absolute;left:10px;top:254px;width:17px;height:186px;background:#fff"></div>
<div style="position:absolute;left:18px;top:187px;width:1px;height:1px;background:#000"></div>
<div style="position:absolute;left:17px;top:196px;width:3px;height:1px;background:#000"></div>
<div style="position:absolute;left:18px;top:206px;width:1px;height:1px;background:#000"></div>
<div class="t" style="position:absolute;left:-1.5px;top:208.4px;width:40px;height:14px;text-align:center;font-size:14.5px;line-height:14px;color:#000;transform:rotate(-90deg)">1</div>
<div style="position:absolute;left:18px;top:225px;width:1px;height:1px;background:#000"></div>
<div style="position:absolute;left:17px;top:234px;width:3px;height:1px;background:#000"></div>
<div style="position:absolute;left:18px;top:244px;width:1px;height:1px;background:#000"></div>
<div style="position:absolute;left:18px;top:263px;width:1px;height:1px;background:#000"></div>
<div style="position:absolute;left:17px;top:273px;width:3px;height:1px;background:#000"></div>
<div style="position:absolute;left:18px;top:282px;width:1px;height:1px;background:#000"></div>
<div class="t" style="position:absolute;left:-1.5px;top:284.8px;width:40px;height:14px;text-align:center;font-size:14.5px;line-height:14px;color:#000;transform:rotate(-90deg)">1</div>
<div style="position:absolute;left:18px;top:301px;width:1px;height:1px;background:#000"></div>
<div style="position:absolute;left:17px;top:311px;width:3px;height:1px;background:#000"></div>
<div style="position:absolute;left:18px;top:320px;width:1px;height:1px;background:#000"></div>
<div class="t" style="position:absolute;left:-1.5px;top:323.0px;width:40px;height:14px;text-align:center;font-size:14.5px;line-height:14px;color:#000;transform:rotate(-90deg)">2</div>
<div style="position:absolute;left:18px;top:340px;width:1px;height:1px;background:#000"></div>
<div style="position:absolute;left:17px;top:349px;width:3px;height:1px;background:#000"></div>
<div style="position:absolute;left:18px;top:359px;width:1px;height:1px;background:#000"></div>
<div class="t" style="position:absolute;left:-1.5px;top:361.2px;width:40px;height:14px;text-align:center;font-size:14.5px;line-height:14px;color:#000;transform:rotate(-90deg)">3</div>
<div style="position:absolute;left:18px;top:378px;width:1px;height:1px;background:#000"></div>
<div style="position:absolute;left:17px;top:387px;width:3px;height:1px;background:#000"></div>
<div style="position:absolute;left:18px;top:397px;width:1px;height:1px;background:#000"></div>
<div class="t" style="position:absolute;left:-1.5px;top:399.4px;width:40px;height:14px;text-align:center;font-size:14.5px;line-height:14px;color:#000;transform:rotate(-90deg)">4</div>
<div style="position:absolute;left:18px;top:416px;width:1px;height:1px;background:#000"></div>
<div style="position:absolute;left:17px;top:426px;width:3px;height:1px;background:#000"></div>
<div style="position:absolute;left:18px;top:435px;width:1px;height:1px;background:#000"></div>
<div class="t" style="position:absolute;left:-1.5px;top:437.6px;width:40px;height:14px;text-align:center;font-size:14.5px;line-height:14px;color:#000;transform:rotate(-90deg)">5</div>
<div style="position:absolute;left:18px;top:454px;width:1px;height:1px;background:#000"></div>
<div style="position:absolute;left:17px;top:464px;width:3px;height:1px;background:#000"></div>
<div style="position:absolute;left:18px;top:473px;width:1px;height:1px;background:#000"></div>
<div class="t" style="position:absolute;left:-1.5px;top:475.8px;width:40px;height:14px;text-align:center;font-size:14.5px;line-height:14px;color:#000;transform:rotate(-90deg)">6</div>
<div style="position:absolute;left:18px;top:492px;width:1px;height:1px;background:#000"></div>
<div style="position:absolute;left:17px;top:502px;width:3px;height:1px;background:#000"></div>
<div style="position:absolute;left:18px;top:511px;width:1px;height:1px;background:#000"></div>
<div class="t" style="position:absolute;left:-1.5px;top:514.0px;width:40px;height:14px;text-align:center;font-size:14.5px;line-height:14px;color:#000;transform:rotate(-90deg)">7</div>
<div style="position:absolute;left:18px;top:531px;width:1px;height:1px;background:#000"></div>
<div style="position:absolute;left:17px;top:540px;width:3px;height:1px;background:#000"></div>
<div style="position:absolute;left:18px;top:550px;width:1px;height:1px;background:#000"></div>
<div class="t" style="position:absolute;left:-1.5px;top:552.2px;width:40px;height:14px;text-align:center;font-size:14.5px;line-height:14px;color:#000;transform:rotate(-90deg)">8</div>
<div style="position:absolute;left:18px;top:569px;width:1px;height:1px;background:#000"></div>
<div style="position:absolute;left:17px;top:578px;width:3px;height:1px;background:#000"></div>
<div style="position:absolute;left:18px;top:588px;width:1px;height:1px;background:#000"></div>
<div class="t" style="position:absolute;left:-1.5px;top:590.4px;width:40px;height:14px;text-align:center;font-size:14.5px;line-height:14px;color:#000;transform:rotate(-90deg)">9</div>
<div style="position:absolute;left:18px;top:607px;width:1px;height:1px;background:#000"></div>
<div style="position:absolute;left:17px;top:616px;width:3px;height:1px;background:#000"></div>
<div style="position:absolute;left:18px;top:626px;width:1px;height:1px;background:#000"></div>
<div class="t" style="position:absolute;left:-1.5px;top:628.6px;width:40px;height:14px;text-align:center;font-size:14.5px;line-height:14px;color:#000;transform:rotate(-90deg)">10</div>
<div style="position:absolute;left:10px;top:280px;width:17px;height:1px;background:#888"></div>
<div style="position:absolute;left:10px;top:282px;width:17px;height:1px;background:#888"></div>
<div style="position:absolute;left:10px;top:306px;width:17px;height:1px;background:#888"></div>
<div style="position:absolute;left:10px;top:308px;width:17px;height:1px;background:#888"></div>
<div style="position:absolute;left:10px;top:332px;width:17px;height:1px;background:#888"></div>
<div style="position:absolute;left:10px;top:334px;width:17px;height:1px;background:#888"></div>
<div style="position:absolute;left:10px;top:358px;width:17px;height:1px;background:#888"></div>
<div style="position:absolute;left:10px;top:360px;width:17px;height:1px;background:#888"></div>
<div style="position:absolute;left:10px;top:385px;width:17px;height:1px;background:#888"></div>
<div style="position:absolute;left:10px;top:387px;width:17px;height:1px;background:#888"></div>
<div style="position:absolute;left:10px;top:411px;width:17px;height:1px;background:#888"></div>
<div style="position:absolute;left:10px;top:413px;width:17px;height:1px;background:#888"></div>
<div style="position:absolute;left:72px;top:178px;width:806px;height:495px;background:#fff;border-left:1px solid #000;border-top:1px solid #000;border-right:3px solid #000"></div>
<div style="position:absolute;left:149px;top:439px;width:1px;height:234px;background:#c0c0c0"></div>
<div style="position:absolute;left:797px;top:439px;width:1px;height:234px;background:#c0c0c0"></div>
<div style="position:absolute;left:149px;top:255px;width:1px;height:185px;background:#000"></div>
<div style="position:absolute;left:278px;top:255px;width:1px;height:185px;background:#000"></div>
<div style="position:absolute;left:408px;top:255px;width:1px;height:185px;background:#000"></div>
<div style="position:absolute;left:538px;top:255px;width:1px;height:185px;background:#000"></div>
<div style="position:absolute;left:668px;top:255px;width:1px;height:185px;background:#000"></div>
<div style="position:absolute;left:797px;top:255px;width:1px;height:185px;background:#000"></div>
<div style="position:absolute;left:149px;top:255px;width:649px;height:1px;background:#000"></div>
<div style="position:absolute;left:149px;top:281px;width:649px;height:1px;background:#000"></div>
<div style="position:absolute;left:149px;top:307px;width:649px;height:1px;background:#000"></div>
<div style="position:absolute;left:149px;top:334px;width:649px;height:1px;background:#000"></div>
<div style="position:absolute;left:149px;top:360px;width:649px;height:1px;background:#000"></div>
<div style="position:absolute;left:149px;top:386px;width:649px;height:1px;background:#000"></div>
<div style="position:absolute;left:149px;top:413px;width:649px;height:1px;background:#000"></div>
<div style="position:absolute;left:149px;top:439px;width:649px;height:1px;background:#000"></div>
<svg style="left:471px;top:449px" width="18" height="18" viewBox="0 0 18 18"><rect x="2" y="1" width="12" height="9" fill="#f0f4ff" stroke="#8090a0" stroke-width="0.8"/><rect x="3" y="2" width="10" height="6" fill="#2a60d8"/><rect x="5" y="9" width="12" height="7" fill="#a8a4a0" stroke="#606060" stroke-width="0.8"/><circle cx="13" cy="12" r="2.2" fill="#e8e8f0" stroke="#304080" stroke-width="1.2"/><rect x="5" y="16" width="12" height="1.5" fill="#333"/></svg>
<div style="position:absolute;left:235px;top:178px;width:329px;height:85px;background:#a4a09a"></div>
<div style="position:absolute;left:236px;top:179px;width:326px;height:82px;background:#fbfaf8"></div>
<div style="position:absolute;left:237px;top:181px;width:324px;height:79px;background:#9a968f"></div>
<div style="position:absolute;left:238px;top:182px;width:323px;height:77px;background:#cac6c0"></div>
<div style="position:absolute;left:238px;top:182px;width:323px;height:17px;background:#a9a59f"></div>
<div style="position:absolute;left:238px;top:199px;width:323px;height:1px;background:#f0eeea"></div>
<div class="t" style="position:absolute;left:240px;top:183px;font-size:14px;color:#000;white-space:nowrap;line-height:1;letter-spacing:0.8px">Tabla</div>
<svg style="left:530px;top:187px" width="6" height="4"><path d="M0 0H6L3 3.5Z" fill="#000"/></svg>
<svg style="left:547px;top:186px" width="9" height="8"><path d="M1 1L8 7M8 1L1 7" stroke="#000" stroke-width="1.5"/></svg>
<svg style="left:245px;top:207px" width="15" height="14" viewBox="0 0 15 14"><rect x="0.5" y="0.5" width="14" height="13" fill="#fff" stroke="#3a68b0" stroke-width="1"/><rect x="0.5" y="0.5" width="14" height="2.5" fill="#4a80d0"/><path d="M2.5 5h3M6.5 5h3M10.5 5h3M2.5 8h3M6.5 8h3M10.5 8h3M2.5 11h3M6.5 11h3M10.5 11h3" stroke="#505860" stroke-width="1.3"/></svg>
<svg style="left:269px;top:213px" width="6" height="4"><path d="M0 0H6L3 3.5Z" fill="#000"/></svg>
<div style="position:absolute;left:281px;top:207px;width:1px;height:15px;background:#aca89f"></div>
<svg style="left:289px;top:207px" width="16" height="15" viewBox="0 0 16 15"><path d="M0 1.5h16M0 5h16" stroke="#111" stroke-width="1.8"/><path d="M0 9h6M9 9h7" stroke="#111" stroke-width="1.5"/><path d="M0 13h4M6 13h4M12 13h4" stroke="#111" stroke-width="1.5"/></svg>
<svg style="left:313px;top:213px" width="6" height="4"><path d="M0 0H6L3 3.5Z" fill="#000"/></svg>
<svg style="left:325px;top:206px" width="15" height="15" viewBox="0 0 15 15"><rect x="0" y="0" width="15" height="1" fill="#8090b0"/><rect x="0" y="0" width="1" height="15" fill="#8090b0"/><rect x="6" y="6" width="9" height="9" fill="#000"/><path d="M1 8 L5 3 L9 5 L7 12 L3 12Z" fill="#fff" stroke="#222" stroke-width="1"/></svg>
<svg style="left:349px;top:213px" width="6" height="4"><path d="M0 0H6L3 3.5Z" fill="#000"/></svg>
<div style="position:absolute;left:361px;top:207px;width:1px;height:15px;background:#aca89f"></div>
<svg style="left:369px;top:206px" width="16" height="16" viewBox="0 0 16 16"><rect x="1" y="1" width="14" height="14" fill="none" stroke="#444" stroke-width="1.6"/><path d="M8 1V15M1 8H15" stroke="#444" stroke-width="1.6"/></svg>
<svg style="left:393px;top:213px" width="6" height="4"><path d="M0 0H6L3 3.5Z" fill="#000"/></svg>
<svg style="left:405px;top:206px" width="17" height="16" viewBox="0 0 17 16"><circle cx="7" cy="2.5" r="2" fill="#d04030"/><circle cx="11" cy="2.5" r="2" fill="#4070d0"/><circle cx="15" cy="2.5" r="2" fill="#40a040"/><path d="M2 12 L8 5 L14 12Z" fill="#f0c020"/><path d="M1 3 L4 8" stroke="#f0c020" stroke-width="2"/><rect x="0.75" y="12.25" width="15.5" height="3.5" fill="#fff" stroke="#000" stroke-width="1.5"/></svg>
<svg style="left:429px;top:213px" width="6" height="4"><path d="M0 0H6L3 3.5Z" fill="#000"/></svg>
<div style="position:absolute;left:441px;top:207px;width:1px;height:15px;background:#aca89f"></div>
<svg style="left:450px;top:207px" width="17" height="16" viewBox="0 0 17 16"><rect x="0" y="0" width="17" height="9" fill="#8a8680"/><path d="M5 9 H12 L11 13 H6Z" fill="#8a8680"/><path d="M6 14 H12 M12 9 H17 V0" stroke="#fff" stroke-width="1" fill="none"/></svg>
<svg style="left:475px;top:206px" width="16" height="16" viewBox="0 0 16 16"><rect x="0.75" y="0.75" width="14.5" height="14.5" fill="#fff" stroke="#111" stroke-width="1.5"/><path d="M1 4h14M4.5 4v11M8 4v11M11.5 4v11M1 7.5h14M1 11h14" stroke="#999" stroke-width="0.8"/></svg>
<svg style="left:499px;top:207px" width="18" height="16" viewBox="0 0 18 16"><rect x="0" y="0" width="16" height="14" fill="#8a8680"/><path d="M0 14 H8 M16 0 V14 H10" stroke="#fff" stroke-width="1" fill="none"/></svg>
<svg style="left:523px;top:213px" width="6" height="4"><path d="M0 0H6L3 3.5Z" fill="#8a8680"/></svg>
<div style="position:absolute;left:242px;top:231px;width:25px;height:27px;background:#b4b0aa;border:1px solid #8a8680;border-radius:3px"></div>
<svg style="left:247px;top:236px" width="15" height="16" viewBox="0 0 15 16"><rect x="0.5" y="1" width="14" height="13" fill="#f8f8f8"/><path d="M1 3h12M1 6h12M1 9h7" stroke="#222" stroke-width="1.5"/><path d="M11 15V8M8.5 10.5L11 7.5L13.5 10.5" stroke="#20b020" stroke-width="2.2" fill="none"/></svg>
<svg style="left:272px;top:236px" width="15" height="16" viewBox="0 0 15 16"><rect x="0.5" y="1" width="14" height="13" fill="#f8f8f8"/><path d="M1 5h8M1 8h9M1 11h8" stroke="#222" stroke-width="1.5"/><path d="M12 3V13M9.5 5.5L12 2.5L14.5 5.5M9.5 10.5L12 13.5L14.5 10.5" stroke="#20b020" stroke-width="2" fill="none"/></svg>
<svg style="left:297px;top:236px" width="15" height="16" viewBox="0 0 15 16"><rect x="0.5" y="1" width="14" height="13" fill="#f8f8f8"/><path d="M1 6h8M1 9h14M1 12h14" stroke="#222" stroke-width="1.5"/><path d="M11 0V7M8.5 4.5L11 7.5L13.5 4.5" stroke="#20b020" stroke-width="2.2" fill="none"/></svg>
<div style="position:absolute;left:320px;top:237px;width:1px;height:15px;background:#aca89f"></div>
<svg style="left:329px;top:236px" width="16" height="16" viewBox="0 0 16 16"><rect x="0.5" y="4.5" width="15" height="11" fill="#fff" stroke="#222" stroke-width="1"/><path d="M0.5 8.5h15M0.5 12h15M5.5 4.5v11M10.5 4.5v11" stroke="#aaa" stroke-width="0.8"/><rect x="0.5" y="5" width="15" height="3" fill="#20a020"/><path d="M9 6 L14 1 L16 3 L11 8Z" fill="#30c030"/></svg>
<svg style="left:354px;top:236px" width="16" height="16" viewBox="0 0 16 16"><rect x="0.5" y="4.5" width="15" height="11" fill="#fff" stroke="#222" stroke-width="1"/><path d="M0.5 8.5h15M0.5 12h15M5.5 4.5v11M10.5 4.5v11" stroke="#aaa" stroke-width="0.8"/><rect x="5" y="5" width="4" height="11" fill="#20a020"/><path d="M9 6 L14 1 L16 3 L11 8Z" fill="#30c030"/></svg>
<svg style="left:379px;top:236px" width="16" height="16" viewBox="0 0 16 16"><rect x="0.5" y="4.5" width="15" height="11" fill="#fff" stroke="#222" stroke-width="1"/><path d="M0.5 8.5h15M0.5 12h15M5.5 4.5v11M10.5 4.5v11" stroke="#aaa" stroke-width="0.8"/><rect x="0.5" y="5" width="15" height="3" fill="#c02020"/><circle cx="12.5" cy="4" r="3.5" fill="#c02020"/><path d="M11 2.5L14 5.5M14 2.5L11 5.5" stroke="#fff" stroke-width="1.2"/></svg>
<svg style="left:404px;top:236px" width="16" height="16" viewBox="0 0 16 16"><rect x="0.5" y="4.5" width="15" height="11" fill="#fff" stroke="#222" stroke-width="1"/><path d="M0.5 8.5h15M0.5 12h15M5.5 4.5v11M10.5 4.5v11" stroke="#aaa" stroke-width="0.8"/><rect x="5" y="5" width="4" height="11" fill="#c02020"/><circle cx="12.5" cy="4" r="3.5" fill="#c02020"/><path d="M11 2.5L14 5.5M14 2.5L11 5.5" stroke="#fff" stroke-width="1.2"/></svg>
<div style="position:absolute;left:428px;top:237px;width:1px;height:15px;background:#aca89f"></div>
<svg style="left:438px;top:236px" width="15" height="16" viewBox="0 0 15 16"><rect x="0.5" y="1" width="12" height="14" fill="#f0f0f8" stroke="#c0c0c8" stroke-width="0.6"/><path d="M2 5h9M2 8h9M2 11h9" stroke="#b8b8d0" stroke-width="2"/><path d="M1 1h7v3H1z" fill="#f8f0b0"/><circle cx="11" cy="4" r="2.2" fill="#f8e020"/><path d="M12 8 L14 15" stroke="#444" stroke-width="1"/></svg>
<svg style="left:462px;top:236px" width="17" height="17" viewBox="0 0 17 17"><rect x="0.5" y="0.5" width="14" height="11" fill="#fff" stroke="#8890a0" stroke-width="0.8"/><path d="M0.5 4h14M0.5 8h14M5 0.5v11M10 0.5v11" stroke="#8890a0" stroke-width="0.8"/><path d="M9 7 V13 L8 12 L7 13 L9 16 H15 L16 12 L16 10 L12 9 V7Z" fill="#f8e8c0" stroke="#333" stroke-width="0.8"/></svg>
<div style="position:absolute;left:487px;top:237px;width:1px;height:15px;background:#aca89f"></div>
<svg style="left:500px;top:236px" width="9" height="16" viewBox="0 0 9 16"><path d="M1 7.5 L4.5 0.5 L8 7.5 M2.5 5 H6.5" stroke="#8a8680" stroke-width="1.8" fill="none"/><path d="M1.5 9 H7.5 L1.5 15 H7.5" stroke="#8a8680" stroke-width="1.8" fill="none"/></svg>
<div style="position:absolute;left:520px;top:237px;width:1px;height:15px;background:#aca89f"></div>
<div class="t" style="position:absolute;left:529px;top:234px;font-size:19px;color:#333;white-space:nowrap;line-height:1;font-family:'Liberation Serif',serif;font-weight:bold">&Sigma;</div>
<div style="position:absolute;left:1002px;top:112px;width:16px;height:561px;background:#cac6c0"></div>
<div style="position:absolute;left:1018px;top:110px;width:2px;height:580px;background:#ecebe8"></div>
<div style="position:absolute;left:1002px;top:113px;width:16px;height:15px;background:linear-gradient(#ecebe7,#c6c2bb);border:1px solid #a09c94;border-radius:3px"></div>
<svg style="left:1002px;top:113px" width="16" height="15" viewBox="0 0 16 15"><path d="M4 8.5H12L8 4.5Z" fill="#000"/></svg>
<div style="position:absolute;left:1002px;top:128px;width:16px;height:465px;background:repeating-conic-gradient(#f6f5f2 0 25%, #b8b4ad 0 50%) 0 0/2px 2px"></div>
<div style="position:absolute;left:1002px;top:128px;width:16px;height:204px;background:linear-gradient(90deg,#dcd8d2,#c8c4bd);border:1px solid #8e8a84;border-radius:2px"></div>
<div style="position:absolute;left:1006px;top:224px;width:1px;height:1px;background:#f8f8f8;box-shadow:1px 1px 0 #9a968f"></div>
<div style="position:absolute;left:1006px;top:228px;width:1px;height:1px;background:#f8f8f8;box-shadow:1px 1px 0 #9a968f"></div>
<div style="position:absolute;left:1006px;top:232px;width:1px;height:1px;background:#f8f8f8;box-shadow:1px 1px 0 #9a968f"></div>
<div style="position:absolute;left:1006px;top:236px;width:1px;height:1px;background:#f8f8f8;box-shadow:1px 1px 0 #9a968f"></div>
<div style="position:absolute;left:1009px;top:224px;width:1px;height:1px;background:#f8f8f8;box-shadow:1px 1px 0 #9a968f"></div>
<div style="position:absolute;left:1009px;top:228px;width:1px;height:1px;background:#f8f8f8;box-shadow:1px 1px 0 #9a968f"></div>
<div style="position:absolute;left:1009px;top:232px;width:1px;height:1px;background:#f8f8f8;box-shadow:1px 1px 0 #9a968f"></div>
<div style="position:absolute;left:1009px;top:236px;width:1px;height:1px;background:#f8f8f8;box-shadow:1px 1px 0 #9a968f"></div>
<div style="position:absolute;left:1012px;top:224px;width:1px;height:1px;background:#f8f8f8;box-shadow:1px 1px 0 #9a968f"></div>
<div style="position:absolute;left:1012px;top:228px;width:1px;height:1px;background:#f8f8f8;box-shadow:1px 1px 0 #9a968f"></div>
<div style="position:absolute;left:1012px;top:232px;width:1px;height:1px;background:#f8f8f8;box-shadow:1px 1px 0 #9a968f"></div>
<div style="position:absolute;left:1012px;top:236px;width:1px;height:1px;background:#f8f8f8;box-shadow:1px 1px 0 #9a968f"></div>
<div style="position:absolute;left:1002px;top:593px;width:16px;height:15px;background:linear-gradient(#ecebe7,#c6c2bb);border:1px solid #a09c94;border-radius:3px"></div>
<svg style="left:1002px;top:593px" width="16" height="15" viewBox="0 0 16 15"><path d="M4.5 9H11.5L8 5Z" fill="#000"/></svg>
<div style="position:absolute;left:1002px;top:609px;width:16px;height:15px;background:linear-gradient(#ecebe7,#c6c2bb);border:1px solid #a09c94;border-radius:3px"></div>
<svg style="left:1002px;top:609px" width="16" height="15" viewBox="0 0 16 15"><path d="M4.5 6H11.5L8 10Z" fill="#000"/></svg>
<div style="position:absolute;left:1002px;top:625px;width:16px;height:15px;background:linear-gradient(#ecebe7,#c6c2bb);border:1px solid #a09c94;border-radius:3px"></div>
<svg style="left:1002px;top:625px" width="16" height="15" viewBox="0 0 16 15"><path d="M5 7H11L8 4Z M5 11H11L8 8Z" fill="#000"/></svg>
<div style="position:absolute;left:1002px;top:641px;width:16px;height:15px;background:linear-gradient(#ecebe7,#c6c2bb);border:1px solid #a09c94;border-radius:3px"></div>
<svg style="left:1002px;top:641px" width="16" height="15" viewBox="0 0 16 15"><circle cx="8" cy="7.5" r="4" fill="#6060e0" stroke="#3838a0" stroke-width="0.6"/><circle cx="6.8" cy="6" r="1.4" fill="#c8c8ff"/></svg>
<div style="position:absolute;left:1002px;top:657px;width:16px;height:15px;background:linear-gradient(#ecebe7,#c6c2bb);border:1px solid #a09c94;border-radius:3px"></div>
<svg style="left:1002px;top:657px" width="16" height="15" viewBox="0 0 16 15"><path d="M5 4H11L8 7Z M5 8H11L8 11Z" fill="#000"/></svg>
<div style="position:absolute;left:4px;top:673px;width:1014px;height:17px;background:#cac6c0"></div>
<div style="position:absolute;left:5px;top:673px;width:1px;height:16px;background:#111"></div>
<div style="position:absolute;left:6px;top:673px;width:16px;height:16px;background:linear-gradient(#e4e2dc,#c8c4bc);border:1px solid #a8a49c;border-radius:3px"></div>
<svg style="left:6px;top:673px" width="16" height="16" viewBox="0 0 16 16"><path d="M9.5 4V11L5.5 7.5Z" fill="#000"/></svg>
<div style="position:absolute;left:22px;top:673px;width:948px;height:16px;background:linear-gradient(#dcd8d2,#c8c4bd);border:1px solid #8e8a84;border-radius:2px"></div>
<div style="position:absolute;left:487px;top:677px;width:1px;height:1px;background:#f8f8f8;box-shadow:1px 1px 0 #9a968f"></div>
<div style="position:absolute;left:487px;top:681px;width:1px;height:1px;background:#f8f8f8;box-shadow:1px 1px 0 #9a968f"></div>
<div style="position:absolute;left:487px;top:685px;width:1px;height:1px;background:#f8f8f8;box-shadow:1px 1px 0 #9a968f"></div>
<div style="position:absolute;left:491px;top:677px;width:1px;height:1px;background:#f8f8f8;box-shadow:1px 1px 0 #9a968f"></div>
<div style="position:absolute;left:491px;top:681px;width:1px;height:1px;background:#f8f8f8;box-shadow:1px 1px 0 #9a968f"></div>
<div style="position:absolute;left:491px;top:685px;width:1px;height:1px;background:#f8f8f8;box-shadow:1px 1px 0 #9a968f"></div>
<div style="position:absolute;left:495px;top:677px;width:1px;height:1px;background:#f8f8f8;box-shadow:1px 1px 0 #9a968f"></div>
<div style="position:absolute;left:495px;top:681px;width:1px;height:1px;background:#f8f8f8;box-shadow:1px 1px 0 #9a968f"></div>
<div style="position:absolute;left:495px;top:685px;width:1px;height:1px;background:#f8f8f8;box-shadow:1px 1px 0 #9a968f"></div>
<div style="position:absolute;left:499px;top:677px;width:1px;height:1px;background:#f8f8f8;box-shadow:1px 1px 0 #9a968f"></div>
<div style="position:absolute;left:499px;top:681px;width:1px;height:1px;background:#f8f8f8;box-shadow:1px 1px 0 #9a968f"></div>
<div style="position:absolute;left:499px;top:685px;width:1px;height:1px;background:#f8f8f8;box-shadow:1px 1px 0 #9a968f"></div>
<div style="position:absolute;left:503px;top:677px;width:1px;height:1px;background:#f8f8f8;box-shadow:1px 1px 0 #9a968f"></div>
<div style="position:absolute;left:503px;top:681px;width:1px;height:1px;background:#f8f8f8;box-shadow:1px 1px 0 #9a968f"></div>
<div style="position:absolute;left:503px;top:685px;width:1px;height:1px;background:#f8f8f8;box-shadow:1px 1px 0 #9a968f"></div>
<div style="position:absolute;left:970px;top:673px;width:16px;height:16px;background:linear-gradient(#e4e2dc,#c8c4bc);border:1px solid #a8a49c;border-radius:3px"></div>
<svg style="left:970px;top:673px" width="16" height="16" viewBox="0 0 16 16"><path d="M9.5 4V11L5.5 7.5Z" fill="#000"/></svg>
<div style="position:absolute;left:986px;top:673px;width:16px;height:16px;background:linear-gradient(#e4e2dc,#c8c4bc);border:1px solid #a8a49c;border-radius:3px"></div>
<svg style="left:986px;top:673px" width="16" height="16" viewBox="0 0 16 16"><path d="M6.5 4V11L10.5 7.5Z" fill="#000"/></svg>
<div style="position:absolute;left:4px;top:690px;width:1016px;height:1px;background:#f4f2ee"></div>
<div style="position:absolute;left:4px;top:691px;width:1016px;height:22px;background:#cac6c0"></div>
<div style="position:absolute;left:9px;top:693px;width:229px;height:19px;border:1px solid #8c887f;border-right-color:#fff;border-bottom-color:#fff"></div>
<div class="t" style="position:absolute;left:15px;top:696px;font-size:14px;color:#000;white-space:nowrap;line-height:1;letter-spacing:0.2px">Página&nbsp; 1 / 1</div>
<div style="position:absolute;left:240px;top:693px;width:253px;height:19px;border:1px solid #8c887f;border-right-color:#fff;border-bottom-color:#fff"></div>
<div class="t" style="position:absolute;left:246px;top:696px;font-size:14px;color:#000;white-space:nowrap;line-height:1;letter-spacing:0.85px">Predeterminado</div>
<div style="position:absolute;left:497px;top:693px;width:44px;height:19px;border:1px solid #8c887f;border-right-color:#fff;border-bottom-color:#fff"></div>
<div class="t" style="position:absolute;left:497px;top:696px;font-size:14px;color:#000;white-space:nowrap;line-height:1;letter-spacing:0.85px;width:44px;text-align:center">100%</div>
<div style="position:absolute;left:545px;top:693px;width:61px;height:19px;border:1px solid #8c887f;border-right-color:#fff;border-bottom-color:#fff"></div>
<div class="t" style="position:absolute;left:545px;top:696px;font-size:14px;color:#000;white-space:nowrap;line-height:1;letter-spacing:0.85px;width:61px;text-align:center">INSERT</div>
<div style="position:absolute;left:611px;top:693px;width:39px;height:19px;border:1px solid #8c887f;border-right-color:#fff;border-bottom-color:#fff"></div>
<div class="t" style="position:absolute;left:611px;top:696px;font-size:14px;color:#000;white-space:nowrap;line-height:1;letter-spacing:0.6px;width:39px;text-align:center">STD</div>
<div style="position:absolute;left:655px;top:693px;width:31px;height:19px;border:1px solid #8c887f;border-right-color:#fff;border-bottom-color:#fff"></div>
<div class="t" style="position:absolute;left:655px;top:696px;font-size:14px;color:#000;white-space:nowrap;line-height:1;letter-spacing:0.2px;width:31px;text-align:center">HYP</div>
<div style="position:absolute;left:691px;top:693px;width:18px;height:19px;border:1px solid #8c887f;border-right-color:#fff;border-bottom-color:#fff"></div>
<div class="t" style="position:absolute;left:691px;top:696px;font-size:14px;color:#000;white-space:nowrap;line-height:1;letter-spacing:0.85px;width:18px;text-align:center">*</div>
<div style="position:absolute;left:714px;top:693px;width:26px;height:19px;border:1px solid #8c887f;border-right-color:#fff;border-bottom-color:#fff"></div>
<div style="position:absolute;left:744px;top:693px;width:271px;height:19px;border:1px solid #8c887f;border-right-color:#fff;border-bottom-color:#fff"></div>
<div class="t" style="position:absolute;left:744px;top:696px;font-size:14px;color:#000;white-space:nowrap;line-height:1;letter-spacing:0.85px;width:271px;text-align:center">Tabla1:A1</div>
<div style="position:absolute;left:0px;top:717px;width:1023px;height:3px;background:#575757"></div>
<div style="position:absolute;left:0px;top:717px;width:48px;height:3px;background:#727272"></div>
</body></html>
